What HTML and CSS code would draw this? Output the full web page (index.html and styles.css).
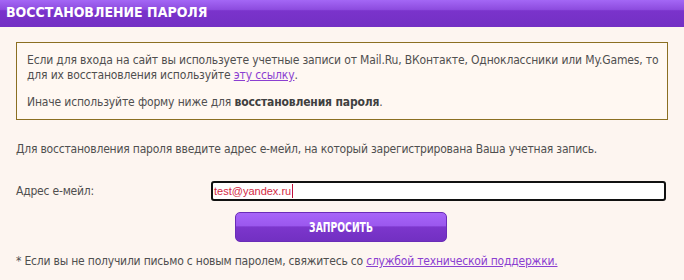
FILE: index.html
```html
<!DOCTYPE html>
<html lang="ru">
<head>
<meta charset="UTF-8">
<title>Восстановление пароля</title>
<link rel="stylesheet" href="styles.css">
</head>
<body>
<div class="page">
  <div class="title-bar">ВОССТАНОВЛЕНИЕ ПАРОЛЯ</div>
  <div class="content">
    <div class="notice">
      <p>Если для входа на сайт вы используете учетные записи от Mail.Ru, ВКонтакте, Одноклассники или My.Games, то для их восстановления используйте <a href="#">эту ссылку</a>.</p>
      <p>Иначе используйте форму ниже для <b>восстановления пароля</b>.</p>
    </div>
    <p class="intro">Для восстановления пароля введите адрес е-мейл, на который зарегистрирована Ваша учетная запись.</p>
    <div class="form-row">
      <label for="email">Адрес е-мейл:</label>
      <div class="input-box"><span class="typed">test@yandex.ru</span><span class="caret"></span></div>
    </div>
    <div class="btn-row"><button class="btn"><span>ЗАПРОСИТЬ</span></button></div>
    <p class="footnote">* Если вы не получили письмо с новым паролем, свяжитесь со <a href="#">службой технической поддержки.</a></p>
  </div>
</div>
</body>
</html>
```
FILE: styles.css
```css
*{ box-sizing:border-box; margin:0; padding:0; }
body{ background:#fdf5f0; color:#4f4f4f; font-family:'DejaVu Sans Condensed',Tahoma,sans-serif; font-size:12px; letter-spacing:-0.2px; }
a{ color:#8b3fd1; text-decoration:underline; }
.title-bar{
  height:27px; padding:4px 0 0 6px;
  background:linear-gradient(180deg,#a467f5 0%,#8d4cdf 35%,#7a33cb 40%,#7330c4 100%);
  color:#fff; font-weight:bold; font-size:14px; letter-spacing:0;
}
.content{ padding:15px 16px 0; }
.notice{
  border:1px solid #8b6f22; background:#fff8f2;
  padding:10px 4px 9px 10px; line-height:15px; letter-spacing:-0.15px;
}
.notice p + p{ margin-top:12px; }
.notice b{ color:#404040; }
.intro{ margin-top:22px; line-height:15px; }
.form-row{ display:flex; align-items:center; margin-top:24px; padding-right:2px; }
.form-row label{ width:195px; }
.input-box{
  flex:1; height:20px; border:2px solid #111; border-radius:3px; background:#fff;
  display:flex; align-items:center; padding-left:1px; letter-spacing:0;
  font-family:'Liberation Sans',Arial,sans-serif; font-size:11px; color:#d42a45;
}
.caret{ width:1px; height:14px; background:#c0103a; margin-left:1px; }
.btn-row{ padding-left:219px; margin-top:11px; }
.btn{
  width:212px; height:30px; border:1px solid #6a2cb8; border-radius:5px; cursor:pointer;
  background:linear-gradient(180deg,#a765f8 0%,#9b58ee 45%,#7c36cc 50%,#7230c2 100%);
  color:#fff; font-family:'DejaVu Sans Condensed',sans-serif;
  font-weight:bold; font-size:13.5px; letter-spacing:0;
}
.btn span{ display:inline-block; transform:scaleX(.76); }
.footnote{ margin-top:12px; }
```
